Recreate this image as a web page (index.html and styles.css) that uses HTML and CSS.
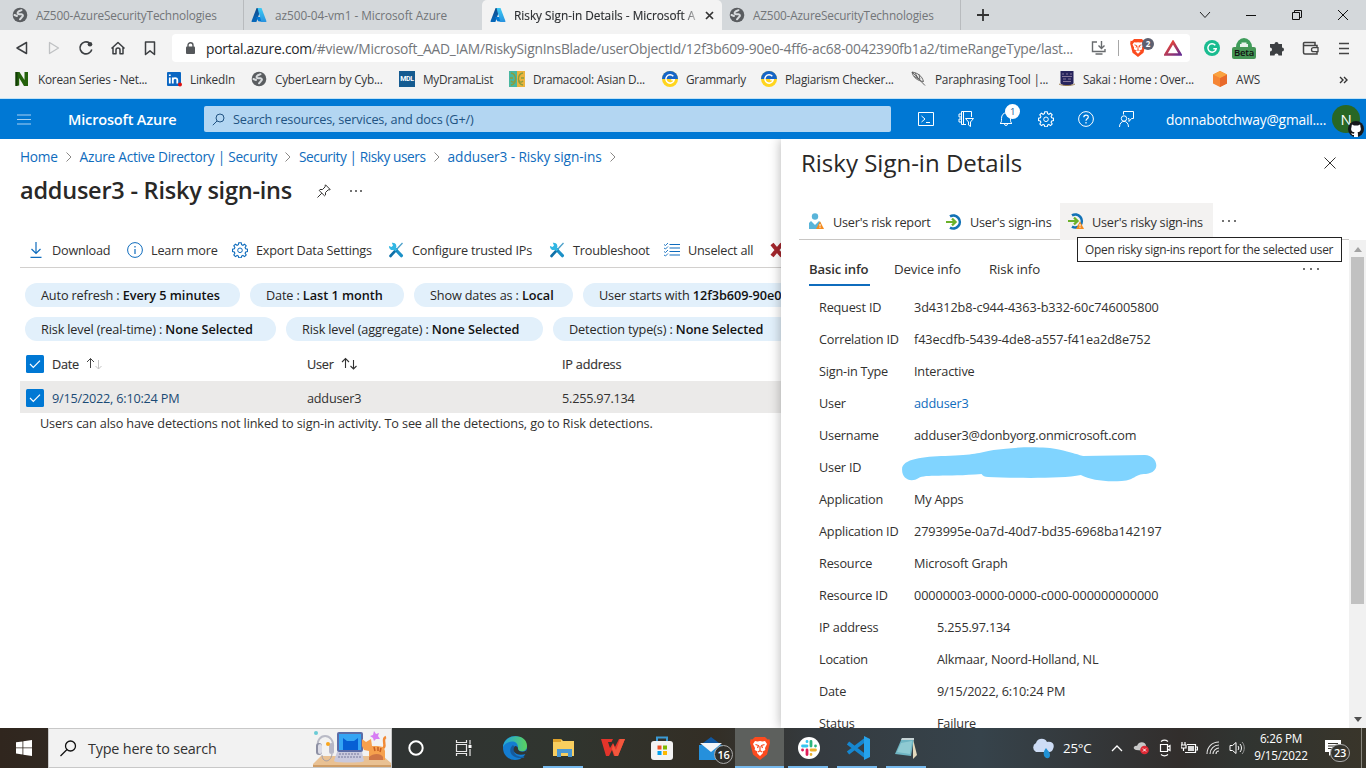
FILE: index.html
```html
<!DOCTYPE html>
<html lang="en">
<head>
<meta charset="utf-8">
<title>Risky Sign-in Details - Microsoft Azure</title>
<link rel="stylesheet" href="styles.css">
</head>
<body>
<svg class="defs" width="0" height="0">
  <defs>
    <linearGradient id="azA" x1="0" y1="0" x2="0" y2="1"><stop offset="0" stop-color="#114a8b"/><stop offset="1" stop-color="#0669bc"/></linearGradient>
    <linearGradient id="azB" x1="0" y1="0" x2="0" y2="1"><stop offset="0" stop-color="#3ccbf4"/><stop offset="1" stop-color="#2892df"/></linearGradient>
    <linearGradient id="edgeG" x1="0" y1="0" x2="1" y2="0"><stop offset="0" stop-color="#1fa4e0"/><stop offset="1" stop-color="#5bd25e"/></linearGradient>
    <linearGradient id="batG" x1="0" y1="0" x2="1" y2="1"><stop offset="0" stop-color="#ff4724"/><stop offset="1" stop-color="#662d91"/></linearGradient>
    <symbol id="globe" viewBox="0 0 16 16"><circle cx="8" cy="8" r="7.300" fill="#5a5d60"/><path d="M9.500 3.200 6.500 4.500C5 5.500 5.500 7 7 7.200h2.500c1.800.3 1.800 2 .5 2.800l-2 2.300M2.500 8l2.500 1" fill="none" stroke="#d9dcde" stroke-width="2" stroke-linecap="round"/></symbol>
    <symbol id="azure" viewBox="0 0 16 16"><path d="M5.600 1h4.600L5.400 15H1.200a.7.7 0 0 1-.6-1z" fill="url(#azA)"/><path d="M5 10h6l1.300 5-5-.8z" fill="#0078d4"/><path d="M6.500 1h4L15.400 14a.7.7 0 0 1-.7 1h-4.200L7.600 5.200z" fill="url(#azB)"/></symbol>
    <symbol id="gram" viewBox="0 0 16 16"><circle cx="8" cy="8" r="8" fill="#ffd51e"/><path d="M0 8a8 8 0 0 1 16 0z" fill="#1565c8"/><path d="M11.300 5.200a4.200 4.200 0 1 0 .9 3.600H9.300" fill="none" stroke="#fff" stroke-width="1.500"/></symbol>
    <symbol id="chev" viewBox="0 0 8 12"><path d="M1.500 1.500 6 6l-4.500 4.500" fill="none" stroke="#8a8886"/></symbol>
    <symbol id="tools" viewBox="0 0 16 16"><path d="M14.500 1 8 8" stroke="#4b9fc9" stroke-width="1.300"/><path d="m7.600 7.500 5.800 6.200" stroke="#1c91c7" stroke-width="3.200" stroke-linecap="round"/><path d="m8 8-5.500 6" stroke="#0f70a8" stroke-width="2.600" stroke-linecap="round"/><path d="M3.800.8A3.700 3.700 0 1 1 1 4l2.500 1L5 3.500z" fill="#31b6e3"/><path d="m5.500 5.500 3 3" stroke="#31b6e3" stroke-width="2.800"/></symbol>
    <symbol id="gear" viewBox="0 0 16 16"><path d="M6.800.8h2.400l.4 1.900 1.300.6 1.700-1.100 1.600 1.600-1.100 1.700.6 1.300 1.800.4v2.400l-1.800.4-.6 1.300 1.100 1.700-1.600 1.600-1.700-1.100-1.300.6-.4 1.800H6.800l-.4-1.800-1.300-.6-1.700 1.100L1.800 13l1.100-1.700-.6-1.300-1.800-.4V7.200l1.800-.4.6-1.300L1.800 3.800l1.600-1.600 1.700 1.100 1.300-.6z" fill="none" stroke="currentColor" stroke-width="1.100"/><circle cx="8" cy="8.300" r="2.300" fill="none" stroke="currentColor"/></symbol>
    <symbol id="signin" viewBox="0 0 16 16"><path d="M4 2.400A6.500 6.500 0 1 1 4 13.600" fill="none" stroke="#1272b6" stroke-width="2.600"/><path d="M0 8h9M6 4.600 9.600 8 6 11.400" fill="none" stroke="#6bb12a" stroke-width="2.200"/></symbol>
    <symbol id="warn" viewBox="0 0 8 8"><path d="M4 .3 8 8H0z" fill="#f58b1f"/><path d="M4 3v2.500M4 6.200v.9" stroke="#fff"/></symbol>
    <symbol id="check" viewBox="0 0 18 18"><rect width="18" height="18" rx="1.500" fill="#0078d4"/><path d="m4 9 3.300 3.300L14 5.600" fill="none" stroke="#fff" stroke-width="1.200"/></symbol>
    <symbol id="brave" viewBox="0 0 20 23"><path d="m5 0h10l2.600 2.500 1.900-.2.500 3.700-.6 2-2.400 9.500L10 23l-7-5.500L.6 8 0 6l.5-3.700 1.900.2z" fill="#fb4b1f"/><path d="m5 4 2.500.5L10 4l2.500.5L15 4l2 3-2 4 .3 2-2.800 1.500.5 1.500L10 19l-3-3 .5-1.500L4.700 13 5 11 3 7z" fill="#fff"/><path d="m5.500 7.500 3 1-1 2.500M14.500 7.500l-3 1 1 2.500M10 9v4.500M8 15l2-1.200 2 1.200" fill="none" stroke="#fb4b1f" stroke-width="1.200"/></symbol>
  </defs>
</svg>

<div class="screen">
  <header class="tabstrip">
    <div class="tab tab-first"><svg class="i16"><use href="#globe"/></svg><span>AZ500-AzureSecurityTechnologies</span></div>
    <div class="tab tab-second"><svg class="i16"><use href="#azure"/></svg><span>az500-04-vm1 - Microsoft Azure</span></div>
    <div class="tab tab-active"><svg class="i16"><use href="#azure"/></svg><span class="fade">Risky Sign-in Details - Microsoft A</span><svg class="tab-close" width="9" height="9"><path d="m1 1 7 7M8 1 1 8" stroke="#333" stroke-width="1.700"/></svg></div>
    <div class="tab tab-last"><svg class="i16"><use href="#globe"/></svg><span>AZ500-AzureSecurityTechnologies</span></div>
    <svg class="newtab" width="12" height="12"><path d="M6 0v12M0 6h12" stroke="#333" stroke-width="1.800"/></svg>
    <div class="wincontrols">
      <svg width="12" height="12"><path d="m1 3 5 5.500L11 3" fill="none" stroke="#222"/></svg>
      <svg width="12" height="12"><path d="M1 6.500h10" stroke="#111"/></svg>
      <svg width="12" height="12"><path d="M1.500 3.500h7v7h-7zM3.500 3.500v-2h7v7h-2" fill="none" stroke="#111"/></svg>
      <svg width="12" height="12"><path d="m1 1 10 10M11 1 1 11" stroke="#111"/></svg>
    </div>
  </header>

  <div class="toolbar">
    <div class="navicons">
      <svg width="16" height="16"><path d="M12.500 2.500v11L3 8z" fill="none" stroke="#3c3f42" stroke-width="1.500" stroke-linejoin="round"/></svg>
      <svg width="16" height="16"><path d="M3.500 2.500v11L12.500 8z" fill="none" stroke="#bfc1c3" stroke-width="1.300" stroke-linejoin="round"/></svg>
      <svg width="16" height="16"><path d="M11.500 3A6 6 0 1 0 13.800 9.500" fill="none" stroke="#3c3f42" stroke-width="1.600"/><circle cx="12" cy="4.300" r="2.300" fill="#3c3f42"/></svg>
      <svg width="16" height="16"><path d="m1.500 8.500 6.500-6 6.500 6M3 7.500v6.200h3V10a2 2 0 0 1 4 0v3.700h3V7.500" fill="none" stroke="#3c3f42" stroke-width="1.500" stroke-linejoin="round"/></svg>
      <svg width="16" height="16"><path d="M3.500 2h9v12.500L8 10.800l-4.500 3.700z" fill="none" stroke="#3c3f42" stroke-width="1.500" stroke-linejoin="round"/></svg>
    </div>
    <div class="urlbar">
      <svg width="9" height="12"><rect y="4.500" width="9" height="7.500" rx="1" fill="#55585b"/><path d="M2 5V3.200a2.500 2.500 0 0 1 5 0V5" fill="none" stroke="#55585b" stroke-width="1.400"/></svg>
      <span class="url"><b>portal.azure.com</b>/#view/Microsoft_AAD_IAM/RiskySignInsBlade/userObjectId/12f3b609-90e0-4ff6-ac68-0042390fb1a2/timeRangeType/last...</span>
      <svg width="16" height="14"><path d="M6 1H1.500v9.500h12.500V8M4.500 13h7M10.500 0v7M7.500 4.500l3 3 3-3" fill="none" stroke="#686b6e" stroke-width="1.400"/></svg>
      <i class="vline"></i>
      <span class="shield"><svg width="16" height="18"><use href="#brave"/></svg><em>2</em></span>
      <svg width="18" height="16"><path d="M9 2 16.500 14.500h-15z" fill="none" stroke="url(#batG)" stroke-width="2.600"/></svg>
    </div>
    <div class="exticons">
      <svg width="16" height="16"><circle cx="8" cy="8" r="8" fill="#1abc90"/><path d="M11.300 5.200a4.200 4.200 0 1 0 .9 3.600H9.300" fill="none" stroke="#fff" stroke-width="1.500"/></svg>
      <span class="beta"><svg width="18" height="10"><path d="M1 10a8 9 0 0 1 16 0z" fill="#3f9c5b"/><path d="M5 10V7h1.500V5.500h5V7H13v3z" fill="#e8f4eb"/></svg><em>Beta</em></span>
      <svg width="16" height="16"><path d="M1 4h4.500a2 2 0 1 1 4 0H13v3.500a2 2 0 1 1 0 4V15.500H9.500a2 2 0 0 0-4 0H1v-4a2 2 0 0 0 0-4z" fill="#3c3f42"/></svg>
      <svg width="17" height="14"><path d="M1.500 2.500a1 1 0 0 1 1-1H13v3M1.500 2.500v9a1.500 1.500 0 0 0 1.500 1.500h12V4.500H3a1.500 1.500 0 0 1-1.500-2" fill="none" stroke="#444" stroke-width="1.500"/><path d="M16 6.700h-4.500a2 2 0 0 0 0 4H16z" fill="#f3f3f3" stroke="#444" stroke-width="1.300"/></svg>
      <svg width="10" height="13"><path d="M0 1.500h10M0 6.500h10M0 11.500h10" stroke="#444" stroke-width="1.600"/></svg>
    </div>
  </div>

  <nav class="bookmarks">
    <a><svg class="i16"><path d="M1.500 1h4l5 8V1h3.500v14h-4l-4.800-8v7.500l-3.700.5z" fill="#24610c"/><path d="M1.500 1h2v14h-2z" fill="#113c05"/></svg>Korean Series - Net...</a>
    <a><svg class="i16"><rect x="1" y="1" width="14" height="14" rx="1" fill="#0a66c2"/><path d="M3.800 6.500v6M3.800 3.500v1.500M6.800 6.500v6M6.800 9c0-2.500 4.500-2.700 4.500 0v3.500" fill="none" stroke="#fff" stroke-width="1.800"/><circle cx="14" cy="13.500" r="2" fill="#d11"/></svg>LinkedIn</a>
    <a><svg class="i16"><use href="#globe"/></svg>CyberLearn by Cyb...</a>
    <a><span class="mdl">MDL</span>MyDramaList</a>
    <a><svg class="i16"><path d="M0 0h8v16H0z" fill="#49b7a0"/><path d="M8 0h8v16H8z" fill="#eab33d"/><path d="M2 2c6 1 6 11 0 12M14 2c-6 1-6 11 0 12M1 7h3M12 7h3M2 10c2 2 4 1 4-1M14 10c-2 2-4 1-4-1" fill="none" stroke="#8b9d3d" stroke-width="1.300"/></svg>Dramacool: Asian D...</a>
    <a><svg class="i16"><use href="#gram"/></svg>Grammarly</a>
    <a><svg class="i16"><use href="#gram"/></svg>Plagiarism Checker...</a>
    <a><svg class="i16"><path d="M1 1c6 1 10 4 11.500 9.500C7 10 2 6.500 1 1l13 13.500M4 2l3 5M8 3.500l1 5M3 5.500l6 3" fill="none" stroke="#555" stroke-width=".9"/></svg>Paraphrasing Tool |...</a>
    <a><svg class="i16"><path d="M1.500 0h13v12c0 2-6.500 3-6.500 3s-6.500-1-6.500-3z" fill="#27245c"/><path d="M3 3h2m2 0h2m2 0h2M3 5.500h10M4 8h3m2 0h3M4 10.500h8" stroke="#85779a"/><path d="M0 13c3 2 13 2 16 0" fill="none" stroke="#9a7d4d"/></svg>Sakai : Home : Over...</a>
    <a><svg class="i16"><path d="m8 0 7 3.500v9L8 16l-7-3.500v-9z" fill="#f58534"/><path d="m8 7 7-3.500v9L8 16z" fill="#e8692b"/><path d="m8 0 7 3.500L8 7 1 3.500z" fill="#faa23f"/></svg>AWS</a>
    <svg class="more" width="9" height="8"><path d="m1 1 3 3-3 3M5 1l3 3-3 3" fill="none" stroke="#333" stroke-width="1.400"/></svg>
  </nav>

  <header class="azbar">
    <svg class="burger" width="14" height="11"><path d="M0 1h14M0 5.500h14M0 10h14" stroke="#a7d0f1" stroke-width="1.200"/></svg>
    <strong>Microsoft Azure</strong>
    <div class="azsearch"><svg width="13" height="13"><circle cx="8" cy="5" r="4" fill="none" stroke="#215382"/><path d="M5 8 .8 12.200" stroke="#215382"/></svg><span>Search resources, services, and docs (G+/)</span></div>
    <div class="azicons">
      <svg width="16" height="16"><path d="M.5 1.500h15v13H.5zM3.500 5 7 8l-3.500 3M8 11.500h4" fill="none" stroke="#fff"/></svg>
      <svg width="16" height="16"><path d="M13.500 6V.5h-10v13H8M3.500 3H1v3h2.500M3.500 8H1v3h2.500M5.500.5v13M7.500 7.500h8L12.500 11v4.500l-2-1.500v-3z" fill="none" stroke="#fff"/></svg>
      <span class="bell"><svg width="16" height="16"><path d="M2 12.500c1.500-1 1.500-2 1.500-5C3.500 0 12.500 0 12.500 7.500c0 3 0 4 1.500 5zM6.500 13a1.500 1.500 0 0 0 3 0" fill="none" stroke="#fff"/></svg><em>1</em></span>
      <svg class="i16"><use href="#gear"/></svg>
      <svg width="16" height="16"><circle cx="8" cy="8" r="7.400" fill="none" stroke="#fff"/><path d="M5.800 6.300c0-3 4.500-2.800 4.500-.3C10.300 7.800 8 7.700 8 9.800M8 11v1.400" fill="none" stroke="#fff" stroke-width="1.200"/></svg>
      <svg width="16" height="16"><path d="M5.500 3.500V.5h10v7h-2l-2.500 3v-3h-1" fill="none" stroke="#fff"/><circle cx="6" cy="7.500" r="2.700" fill="none" stroke="#fff"/><path d="M1.500 16c0-7.500 9-7.500 9 0" fill="none" stroke="#fff"/></svg>
    </div>
    <span class="email">donnabotchway@gmail....</span>
    <span class="avatar">N<svg width="16" height="16" viewBox="0 0 16 16"><circle cx="8" cy="8" r="8" fill="#17191c"/><path d="M4 3.500 6 4.500h4l2-1c.6 1.500.4 2 .4 2.500 1 2 .6 5-2.900 5.300.5.700.5 1 .5 4.700H6v-2c-2 .3-2-.7-2.800-1.600C4.500 12.200 5 13 6 12.500l.5-1.200C3 11 2.600 8 3.600 6c0-.5-.2-1 .4-2.500z" fill="#fff"/></svg></span>
  </header>

  <div class="content">
    <main>
      <div class="crumbs"><a>Home</a><svg><use href="#chev"/></svg><a>Azure Active Directory | Security</a><svg><use href="#chev"/></svg><a class="tight">Security | Risky users</a><svg><use href="#chev"/></svg><a class="wide">adduser3 - Risky sign-ins</a><svg><use href="#chev"/></svg></div>
      <div class="titlerow"><h1>adduser3 - Risky sign-ins</h1><svg width="14" height="14"><path d="m8.500.8 4.700 4.700-1.200.5-.8-.2-2.700 2.700v2.500l-1 .8L2.200 6.500l.8-1h2.500L8.200 2.800 8 2zM4.800 9.200.5 13.500" fill="none" stroke="#323130"/></svg><span class="dots small"><i></i><i></i><i></i></span></div>
      <div class="cmds">
        <span><svg class="i16"><path d="M8 0v11M3.500 7 8 11.500 12.500 7M2.500 15.300h11" fill="none" stroke="#0f6cbd" stroke-width="1.200"/></svg>Download</span>
        <span><svg class="i16"><circle cx="8" cy="8" r="7.400" fill="none" stroke="#0f6cbd"/><path d="M8 7v5M8 4v1.500" stroke="#0f6cbd" stroke-width="1.200"/></svg>Learn more</span>
        <span><svg class="i16 blue"><use href="#gear"/></svg>Export Data Settings</span>
        <span><svg class="i16"><use href="#tools"/></svg>Configure trusted IPs</span>
        <span><svg class="i16"><use href="#tools"/></svg>Troubleshoot</span>
        <span><svg class="i16"><path d="M5.500 2.500H16M5.500 6H16M5.500 9.500H16M5.500 13H16" stroke="#0f6cbd" stroke-width="1.100"/><path d="m0 2.500 1.500 1L4 1M0 6l1.500 1L4 4.500M0 9.500l1.500 1L4 8M0 13l1.500 1L4 11.500" fill="none" stroke="#0f6cbd" stroke-width=".9"/></svg>Unselect all</span>
        <span><svg class="i16"><path d="m3 2 10 12M13 2 3 14" stroke="#a4262c" stroke-width="4"/></svg></span>
      </div>
      <div class="pills"><span>Auto refresh : <b>Every 5 minutes</b></span><span>Date : <b>Last 1 month</b></span><span>Show dates as : <b>Local</b></span><span>User starts with <b>12f3b609-90e0</b></span></div>
      <div class="pills pills-second"><span>Risk level (real-time) : <b>None Selected</b></span><span>Risk level (aggregate) : <b>None Selected</b></span><span>Detection type(s) : <b>None Selected</b></span></div>
      <div class="row head"><svg class="cb"><use href="#check"/></svg><span>Date <svg class="sort" width="18" height="13"><path d="M4.500 11V1.500M1 5l3.500-3.500L8 5" fill="none" stroke="#444"/><path d="M12.500 3v9M9.500 9l3 3 3-3" fill="none" stroke="#c4c4c4"/></svg></span><span>User <svg class="sort" width="18" height="13"><path d="M4.500 11V1.500M1 5l3.500-3.500L8 5M12.500 3v9M9.500 9l3 3 3-3" fill="none" stroke="#333" stroke-width="1.100"/></svg></span><span>IP address</span></div>
      <div class="row selected"><svg class="cb"><use href="#check"/></svg><span class="datelink">9/15/2022, 6:10:24 PM</span><span>adduser3</span><span>5.255.97.134</span></div>
      <p class="note">Users can also have detections not linked to sign-in activity. To see all the detections, go to Risk detections.</p>
    </main>

    <aside>
      <div class="paneltitle"><h2>Risky Sign-in Details</h2><svg width="12" height="12"><path d="m.5.5 11 11M11.500.5l-11 11" stroke="#323130"/></svg></div>
      <div class="panelcmds">
        <span class="pc pc-report"><svg width="16" height="17"><circle cx="6" cy="3.500" r="3.200" fill="#59b4d9"/><path d="M0 16V10l2-2 4 4 4-4 2 2v6z" fill="#59b4d9"/><svg x="7" y="8" width="8" height="8"><use href="#warn"/></svg></svg>User's risk report</span>
        <span class="pc pc-signins"><svg class="i16"><use href="#signin"/></svg>User's sign-ins</span>
        <span class="pc hover"><svg width="16" height="17"><svg width="16" height="16"><use href="#signin"/></svg><svg x="8" y="8" width="8" height="8"><use href="#warn"/></svg></svg>User's risky sign-ins</span>
        <span class="dots"><i></i><i></i><i></i></span>
        <div class="tooltip">Open risky sign-ins report for the selected user</div>
      </div>
      <div class="panelbody">
        <div class="scrollarea">
          <div class="ptabs"><span class="on">Basic info</span><span>Device info</span><span>Risk info</span><span class="dots"><i></i><i></i><i></i></span></div>
          <dl>
            <dt>Request ID</dt><dd>3d4312b8-c944-4363-b332-60c746005800</dd>
            <dt>Correlation ID</dt><dd>f43ecdfb-5439-4de8-a557-f41ea2d8e752</dd>
            <dt>Sign-in Type</dt><dd>Interactive</dd>
            <dt>User</dt><dd class="link">adduser3</dd>
            <dt>Username</dt><dd>adduser3@donbyorg.onmicrosoft.com</dd>
            <dt>User ID</dt><dd class="redacted"><svg width="256" height="36" viewBox="0 0 232 36" preserveAspectRatio="none"><path d="M1 23C0 12 20 9.500 40 9 67 8 70 6 84 3c22-3.500 46-3.500 59-.5 12 3 14 4 22 6.500l56-1c11 0 16 17 1 19-11 0-9 6-22 7-16 1-28-1-37-6-18 4-62 3-84 2-3 0-5-1-6-3-33 3-51 0-57 4-7 5-15 1-15-8z" fill="#80d4ff"/></svg></dd>
            <dt>Application</dt><dd>My Apps</dd>
            <dt>Application ID</dt><dd>2793995e-0a7d-40d7-bd35-6968ba142197</dd>
            <dt>Resource</dt><dd>Microsoft Graph</dd>
            <dt>Resource ID</dt><dd>00000003-0000-0000-c000-000000000000</dd>
            <dt>IP address</dt><dd class="in">5.255.97.134</dd>
            <dt>Location</dt><dd class="in">Alkmaar, Noord-Holland, NL</dd>
            <dt>Date</dt><dd class="in">9/15/2022, 6:10:24 PM</dd>
            <dt>Status</dt><dd class="in">Failure</dd>
          </dl>
        </div>
        <div class="scrollbar"><svg width="8" height="5"><path d="M0 5 4 0l4 5z" fill="#a3a3a3"/></svg><i></i><svg width="8" height="5"><path d="M0 0h8L4 5z" fill="#505050"/></svg></div>
      </div>
    </aside>
  </div>

  <footer class="taskbar">
    <div class="start"><svg width="16" height="16"><path d="m0 2.300 6.500-.9v6.100H0zM7.300 1.300 16 0v7.500H7.300zM0 8.300h6.500v6.200L0 13.600zM7.300 8.300H16V16l-8.700-1.300z" fill="#fff"/></svg></div>
    <div class="tsearch"><svg width="17" height="17"><circle cx="10.500" cy="6" r="5" fill="none" stroke="#111" stroke-width="1.300"/><path d="m7 9.500-6.500 6.500" stroke="#111" stroke-width="1.300"/></svg><span>Type here to search</span>
      <svg class="scene" width="78" height="38"><path d="M0 38v-3l8-8h62l8 7v4z" fill="#e9c193"/><path d="M0 36h78v2H0z" fill="#cf9d66"/><circle cx="3" cy="4" r="2" fill="#69cbd6"/><path d="M5 19C2 3 22 3 20 19" fill="none" stroke="#b9bac6" stroke-width="2"/><rect x="3" y="14" width="6" height="12" rx="3" fill="#8c8fa3"/><rect x="5" y="15" width="4" height="10" rx="2" fill="#dcdce6"/><rect x="16" y="14" width="5" height="11" rx="2.500" fill="#b7b7c6"/><path d="M9 26c0 8 9 8 10-1" fill="none" stroke="#a19daa"/><circle cx="15" cy="15" r="2" fill="#f9a51c"/><rect x="24" y="3" width="26" height="20" rx="2" fill="#5c6ca6"/><rect x="26" y="5" width="22" height="16" fill="#35a5f4"/><path d="M30 9l4 3h7l4-3v12H30z" fill="#075fd4"/><path d="m24 23-3 9c0 2 30 2 30 0l-2-9z" fill="#c9c9dd"/><path d="M26 25h21M25 28h23" stroke="#77789b" stroke-dasharray="2 1"/><path d="M61 2l2 3 3-1-1 3 2 3-4 0-2 2-1-3-3-2 3-1z" fill="#d77cf4"/><path d="M66 20c11 0 1-10 7-12" fill="none" stroke="#f18a36" stroke-width="2.500"/><path d="m49 10 4 3 5-3 1 7c5 0 12-1 13 5v9h-4v-5h-8v5h-4v-9l-5-1-2-4z" fill="#f6a04d"/><path d="m61 18 1 4m3-4v4m3-3-1 4" fill="none" stroke="#c65e23" stroke-width="1.500"/><path d="M56 31v-3c4-4 12-4 14 0v3z" fill="#cf7545"/></svg>
    </div>
    <div class="apps">
      <span class="app"><svg width="18" height="18"><circle cx="9" cy="9" r="6.700" fill="none" stroke="#fff" stroke-width="2"/></svg></span>
      <span class="app"><svg width="18" height="16"><path d="M1.500 0v2.500h10V0M1.500 4.500h10v7h-10zM1.500 16v-2.500h10V16M15 0v4.500M15 9v7" fill="none" stroke="#e8e8e8" stroke-width="1.200"/><path d="M13.500 5h3v3h-3z" fill="#fff"/></svg></span>
      <span class="app gap"><svg width="24" height="24"><circle cx="12" cy="12" r="12" fill="#147dd1"/><path d="M0 10C2-3 24-3 24 10c0 7-9 6-9 3C16 3 4 4 0 11" fill="url(#edgeG)"/><path d="M10 9c-6 5-2 14 10 13 1 0 2-1 1-1.500-7 1-12-3-9-9z" fill="#155a9d"/><path d="M12 10c-4 5 1 11 11 8 0 0 1-3 1-5-1 4-9 3-9 0 0-2-1-3-3-3z" fill="#313534"/></svg></span>
      <span class="app run"><svg width="22" height="20"><path d="M0 1h8l2 2h11v15H0z" fill="#f8ce5f"/><path d="M0 1h8v3H0z" fill="#dfa22b"/><path d="M4 11h15v8h-4v-4H8v4H4z" fill="#4b98d3"/></svg></span>
      <span class="app"><svg width="24" height="20"><path d="M0 1h12l-1.500 3H7l2 6 3-5 2 4 4-8h6l-7 17h-4l-2-6-3 6H5z" fill="#e3342b"/><path d="m12 6 3 6 4-11h5l-7 17h-3l-3-7z" fill="#f2573d"/></svg></span>
      <span class="app"><svg width="22" height="24"><path d="M6 6V1.500h10V6" fill="none" stroke="#3b9ad4" stroke-width="2"/><rect y="5" width="22" height="19" rx="3" fill="#f3f3f3"/><path d="M6.500 9.500h4v4h-4z" fill="#ee5126"/><path d="M12 9.500h4v4h-4z" fill="#7fb900"/><path d="M6.500 15h4v4h-4z" fill="#00a1ef"/><path d="M12 15h4v4h-4z" fill="#fdb900"/></svg></span>
      <span class="app mail"><svg width="24" height="23"><path d="m0 9 12-9 12 9z" fill="#1057a0"/><path d="M0 8h24v15H0z" fill="#2590dc"/><path d="M1 6h22L12 15z" fill="#f3f5f8"/></svg><em>16</em></span>
      <span class="app active"><svg width="20" height="23"><use href="#brave"/></svg></span>
      <span class="app run"><svg width="22" height="22"><circle cx="11" cy="11" r="11" fill="#fff"/><g fill="none" stroke-width="2.800" stroke-linecap="round"><path d="M4.500 9h4.500M9 4.500v.2" stroke="#36c5f0"/><path d="M13 4.500v4.500M17.500 9v.1" stroke="#2eb67d"/><path d="M13 13h4.500M13 17.500v.1" stroke="#ecb22e"/><path d="M9 13v4.500M4.500 13h.1" stroke="#e01e5a"/></g></svg></span>
      <span class="app run"><svg width="24" height="24"><path d="m2 7 17 13M2 17 19 4" stroke="#1687d0" stroke-width="3.800"/><path d="m18 0 6 3v18l-6 3z" fill="#25a3ec"/></svg></span>
      <span class="app run"><svg width="24" height="22"><path d="m18 2 4 16-4 4z" fill="#e3d8bc"/><path d="M7 1h12l-3 18-16-2z" fill="#6fb5c3"/><path d="M7 1h12v2L6 3z" fill="#c6d3d5"/><path d="m6 6 11-2-2 13-13-2z" fill="#a5d9dc" opacity=".6"/></svg></span>
    </div>
    <div class="tray">
      <svg width="24" height="21"><path d="M5 14a5 5 0 0 1 0-9c1-5 9-6 11-1 6-1 8 3 6 7-1 3-3 3-5 3z" fill="#cddcf5"/><path d="M15 10c-7 9 4 14 4 7 0-3-2-4-4-7z" fill="#1f91d5"/></svg>
      <span class="temp">25°C</span>
      <svg class="caret" width="12" height="7"><path d="m1 6 5-5 5 5" fill="none" stroke="#fff" stroke-width="1.300"/></svg>
      <div class="status">
      <svg width="16" height="14"><path d="M3 9C-1 8 1 4 4 5c2-6 10-4 9 1v4z" fill="#c8c8c8"/><circle cx="11.500" cy="9" r="4.300" fill="#df2935"/><path d="m10 7.500 3 3m0-3-3 3" stroke="#fff"/></svg>
      <svg width="14" height="18"><path d="M2.500 5.500h7v7h-7zM9.500 8 12 6.500v5L9.500 10M3 2.500c2-1.500 5-1.500 7 0M3 15.500c2 1.500 5 1.500 7 0" fill="none" stroke="#fff" stroke-width="1.200"/></svg>
      <svg width="17" height="14"><path d="M6 3.500h8.500v8H4M15 6h1.500v3H15M1 1v3M4 1v3M0 4h5v3H0zM2.500 7v3" fill="none" stroke="#fff" stroke-width="1.200"/><path d="M7 5h6v5H7z" fill="#ddd"/></svg>
      <svg width="14" height="14"><g fill="none" stroke="#e5e5e5" stroke-width="1.100"><path d="M1 13C1 6 6 1 13 1M4 13c0-5 4-9 9-9M7 13c0-3 3-6 6-6M10 13c0-2 1-3 3-3"/></g></svg>
      <svg width="16" height="14"><path d="M1 4.500h2.500L7 1.500v11L3.500 9.500H1z" fill="none" stroke="#fff"/><path d="M9 5c1 1 1 3 0 4M11 3c2 2 2 6 0 8" fill="none" stroke="#fff"/><path d="M13 1c3 3 3 9 0 12" fill="none" stroke="#999"/></svg>
      </div>
      <div class="clock"><span>6:26 PM</span><span>9/15/2022</span></div>
      <div class="notif"><svg width="16" height="16"><path d="M0 0h16v12H8l-4 4v-4H0z" fill="#fff"/><path d="M3 3.500h10M3 6h10M3 8.500h7" stroke="#36352e"/></svg><em>23</em></div>
      <i class="peek"></i>
    </div>
  </footer>
</div>
</body>
</html>
```
FILE: styles.css
```css
* { box-sizing: border-box; }
body { margin: 0; width: 1366px; height: 768px; overflow: hidden; font-family: "Open Sans", "Noto Sans", sans-serif; font-size: 12.7px; letter-spacing: -.22px; color: #323130; background: #fff; }
.defs { position: absolute; }
svg { display: block; flex: none; }
span, a, h1, h2, dt, dd, strong { white-space: nowrap; }
em { font-style: normal; }
.i16 { width: 16px; height: 16px; }
.screen { width: 1366px; height: 768px; display: flex; flex-direction: column; overflow: hidden; }

/* Browser tabs */
.tabstrip { height: 30px; flex: none; display: flex; align-items: center; background: #d4d8db; font-size: 11.8px; letter-spacing: -.17px; }
.tab { height: 30px; display: flex; align-items: center; gap: 8px; color: #727578; flex: none; }
.tab-first { width: 244px; padding-left: 12px; border-right: 1px solid #b8bbbe; }
.tab-second { width: 238px; padding-left: 7px; letter-spacing: -.05px; }
.tab-active { width: 240px; padding: 0 8px; background: #f3f3f3; border-radius: 5px 5px 0 0; color: #2b2d30; letter-spacing: 0; }
.tab-last { width: 239px; padding-left: 7px; border-right: 1px solid #b8bbbe; }
.fade { width: 183px; -webkit-text-stroke: .15px; mask-image: linear-gradient(90deg, #000 168px, transparent 188px); }
.newtab { margin-left: 16px; }
.wincontrols { display: flex; gap: 34px; margin-left: auto; padding-right: 17px; }

/* Address row */
.toolbar { height: 36px; flex: none; display: flex; align-items: center; background: #f3f3f3; }
.navicons { width: 172px; padding-left: 14px; display: flex; gap: 16px; }
.urlbar { width: 1018px; height: 28px; padding-left: 14px; border-radius: 4px; background: #fff; display: flex; align-items: center; font-size: 13.8px; letter-spacing: -.215px; color: #73767a; }
.url { width: 867px; margin: 0 18px 0 11px; }
.url b { font-weight: 400; color: #25272a; }
.vline { width: 1px; height: 16px; margin: 0 11px; background: #a7a7a7; }
.shield { position: relative; margin-right: 18px; }
.shield em { position: absolute; left: 12px; top: -1px; width: 12px; height: 12px; border-radius: 6px; background: #5d6070; color: #fff; font: bold 8px/12px "Open Sans", sans-serif; text-align: center; }
.exticons { display: flex; align-items: center; padding-left: 14px; }
.exticons > :nth-child(2) { margin: 0 13px 0 12px; }
.exticons > :nth-child(4) { margin: 0 20px 0 17px; }
.beta { width: 24px; display: flex; flex-direction: column; align-items: center; }
.beta em { width: 24px; height: 12px; border-radius: 2px; background: #459655; color: #111; font-size: 9.500px; letter-spacing: -.2px; line-height: 12px; font-weight: 600; text-align: center; }

/* Bookmarks */
.bookmarks { height: 33px; flex: none; padding: 0 18px 5px 14px; display: grid; grid-template-columns: 152px 85px 148px 110px 153px 99px 150px 148px 153px 1fr 9px; align-items: center; background: #f3f3f3; border-bottom: 1px solid #c2e3f7; font-size: 11.800px; letter-spacing: -.25px; color: #333538; }
.bookmarks a { display: flex; align-items: center; gap: 8px; padding-bottom: 1px; }
.mdl { width: 16px; height: 16px; background: #155b90; color: #fff; font: bold 7px/16px Roboto, sans-serif; text-align: center; letter-spacing: -.3px; }

/* Portal bar */
.azbar { height: 40px; flex: none; display: flex; align-items: center; background: #0078d4; color: #fff; }
.burger { margin-left: 17px; }
.azbar strong { width: 136px; margin-left: 37px; font-size: 14.500px; font-weight: 600; letter-spacing: -.15px; }
.azsearch { width: 687px; height: 26px; padding-left: 8px; display: flex; align-items: center; gap: 8px; border-radius: 2px; background: #b3d6f2; color: #215382; font-size: 12.700px; letter-spacing: -.16px; }
.azicons { margin-left: 15px; width: 240px; display: flex; justify-content: space-around; align-items: center; }
.bell { position: relative; }
.bell em { position: absolute; left: 7px; top: -7px; width: 15px; height: 15px; border-radius: 50%; background: #fff; color: #17599b; font-size: 9.500px; line-height: 15px; text-align: center; }
.email { width: 166px; margin-left: 20px; font-size: 13.800px; }
.avatar { position: relative; width: 28px; height: 28px; border-radius: 50%; background: #286725; font-size: 15px; line-height: 28px; text-align: center; }
.avatar svg { position: absolute; left: 16px; top: 16px; }

/* Main blade */
.content { height: 589px; flex: none; display: flex; }
main { width: 781px; padding-left: 20px; overflow: hidden; }
.crumbs { height: 36px; padding-bottom: 1px; display: flex; align-items: center; color: #0f6cbd; font-size: 13.700px; letter-spacing: -.27px; }
.crumbs svg { width: 8px; height: 12px; margin: 0 7px; }
.tight { letter-spacing: -.44px; }
.wide { letter-spacing: -.1px; }
.titlerow { height: 32px; display: flex; align-items: center; }
h1, h2 { margin: 0; font-size: 24px; font-weight: 500; letter-spacing: 0; line-height: 30px; color: #292827; }
h1 { width: 297px; font-weight: 600; font-size: 23.500px; letter-spacing: -.23px; padding-bottom: 2px; }
.dots { display: flex; align-items: center; gap: 4px; }
.dots i { width: 2px; height: 2px; border-radius: 1px; background: #444; }
.small { gap: 3px; margin-left: 19px; }
.cmds { height: 61px; padding: 26px 0 0 8px; display: grid; grid-template-columns: 99px 105px 156px 161px 115px 105px 20px; align-items: center; border-bottom: 1px solid #d2d0ce; }
.cmds span { display: flex; align-items: center; gap: 8px; }
.blue { color: #0f6cbd; }
.pills { display: flex; gap: 10px; margin: 15px 0 0 5px; letter-spacing: -.15px; }
.pills-second { margin-top: 10px; }
.pills span { width: 215px; height: 24px; flex: none; border-radius: 12px; padding: 0 16px; line-height: 25px; background: #e2f0fb; color: #292827; }
.pills b { font-weight: 600; letter-spacing: -.02px; color: #111; }
.pills span:nth-child(2) { width: 154px; }
.pills span:nth-child(3) { width: 159px; }
.pills span:nth-child(4) { width: 280px; }
.pills-second span:nth-child(1) { width: 251px; }
.pills-second span:nth-child(2) { width: 257px; }
.pills-second span:nth-child(3) { width: 238px; }
.row { display: grid; grid-template-columns: 26px 255px 255px 1fr; align-items: center; padding-left: 6px; }
.row span { display: flex; align-items: center; gap: 7px; }
.cb { width: 18px; height: 18px; }
.head { height: 32px; margin: 7px 0 1px; padding-bottom: 1px; -webkit-text-stroke: .15px; }
.selected { height: 32px; padding-top: 2px; background: #ebeae9; }
.datelink { color: #1b4a75; }
.note { margin: 2px 0 0 20px; line-height: 17px; letter-spacing: -.135px; white-space: nowrap; }

/* Details panel */
aside { position: relative; width: 585px; background: #fff; box-shadow: 0 0 11px rgba(0,0,0,.3); clip-path: inset(0 0 0 -14px); display: flex; flex-direction: column; }
.paneltitle { height: 64px; padding: 0 30px 16px 20px; display: flex; justify-content: space-between; align-items: center; }
.panelcmds { position: relative; height: 37px; margin: 0 17px 0 18px; padding-left: 10px; display: flex; align-items: center; border-bottom: 1px solid #c8c6c4; }
.pc { display: flex; align-items: center; gap: 8px; height: 37px; padding-top: 1px; }
.pc-report { width: 137px; }
.pc-signins { width: 114px; }
.hover { width: 153px; padding-left: 8px; background: #f3f2f1; }
.panelcmds .dots { margin-left: 9px; }
.tooltip { position: absolute; left: 278px; top: 34px; width: 265px; height: 25px; border: 1px solid #222; background: #fff; padding-left: 7px; font-size: 11.900px; letter-spacing: -.24px; line-height: 23px; white-space: nowrap; z-index: 2; }
.panelbody { flex: 1; min-height: 0; display: flex; }
.scrollarea { width: 568px; padding-left: 28px; overflow: hidden; }
.ptabs { height: 46px; display: flex; font-size: 13.300px; letter-spacing: -.15px; line-height: 58px; }
.ptabs > span { width: 95px; height: 46px; }
.ptabs > .on { width: 61px; margin-right: 24px; font-size: 13.100px; font-weight: 600; border-bottom: 2px solid #0f6cbd; }
.ptabs > .dots { width: auto; height: 58px; margin-left: 219px; gap: 5px; }
dl { margin: 5px 0 0 10px; display: grid; grid-template-columns: 95px 1fr; grid-auto-rows: 32px; line-height: 32px; }
dt { letter-spacing: -.2px; }
dd { margin: 0; letter-spacing: -.18px; }
dd:nth-of-type(-n+2), dd:nth-of-type(8), dd:nth-of-type(10) { letter-spacing: -.08px; }
.link { color: #0f6cbd; }
.in { padding-left: 23px; }
.redacted { position: relative; }
.redacted svg { position: absolute; left: -13px; top: -4px; }
.scrollbar { width: 17px; background: #f1f1f1; display: flex; flex-direction: column; align-items: center; padding: 7px 0 6px; }
.scrollbar i { width: 13px; height: 347px; margin: 5px 0 auto; background: #c1c1c1; }

/* Taskbar */
.taskbar { height: 40px; flex: none; display: flex; background: linear-gradient(90deg, #30261e 0, #303433 392px, #30352f 560px, #332e25 710px, #353b40 820px, #36434b 980px, #322e2c 1180px, #303431 1240px, #39352a 1366px); color: #fff; }
.start { width: 48px; display: flex; align-items: center; justify-content: center; }
.tsearch { width: 344px; padding-left: 11px; display: flex; align-items: center; gap: 11px; background: #f2f2f2; border: 1px solid #c8c8c8; color: #333; font-size: 14.400px; letter-spacing: -.2px; }
.scene { margin-left: auto; }
.apps { width: 539px; display: flex; }
.app { position: relative; width: 49px; height: 40px; display: flex; align-items: center; justify-content: center; flex: none; }
.app:first-child { width: 47px; }
.gap { margin-left: 2px; }
.run::after { content: ""; position: absolute; left: 4px; right: 5px; bottom: 0; height: 2px; background: #76b9ed; }
.active { background: #5d605d; box-shadow: inset 0 -2px #76b9ed; }
.mail em { position: absolute; left: 28px; top: 17px; width: 19px; height: 19px; border: 1px solid #aaa; border-radius: 50%; background: #302f2b; font-size: 11px; font-weight: 600; line-height: 17px; text-align: center; }
.tray { flex: 1; display: flex; align-items: center; padding-left: 100px; }
.temp { width: 48px; margin-left: 8px; font-size: 13.300px; }
.status { display: flex; align-items: center; justify-content: space-between; width: 112px; margin-left: 10px; }
.clock { width: 70px; margin-left: 1px; display: flex; flex-direction: column; align-items: center; font-size: 11.700px; line-height: 17px; padding-bottom: 2px; }
.notif { position: relative; margin-left: 9px; }
.notif em { position: absolute; left: 5px; top: 4px; width: 20px; height: 18px; border: 1px solid #aaa; border-radius: 9px; background: #36352e; font-size: 11px; font-weight: 600; line-height: 16px; text-align: center; }
.peek { width: 1px; height: 40px; margin-left: auto; margin-right: 4px; background: #88867e; }
```
